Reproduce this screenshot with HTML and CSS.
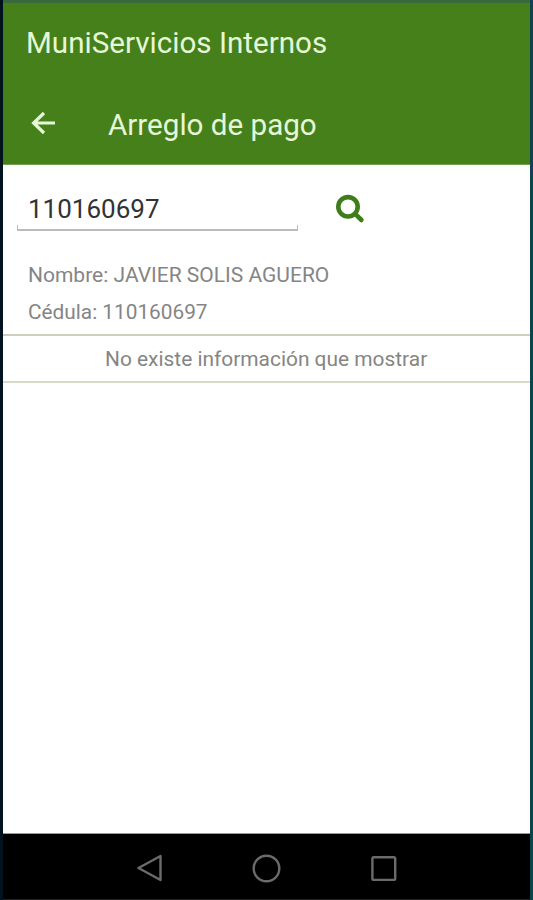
FILE: index.html
```html
<!DOCTYPE html>
<html lang="es">
<head>
    <meta charset="UTF-8">
    <meta name="viewport" content="width=device-width, initial-scale=1.0">
    <title>MuniServicios Internos</title>
    <link rel="stylesheet" href="styles.css">
</head>
<body>

    <div class="screen">
        <header class="header">
            <h1 class="app-title">MuniServicios Internos</h1>
            <div class="toolbar">
                <svg class="back" viewBox="0 0 26 24" width="26" height="24">
                    <path d="M14 2 L3.6 12 L14 22 M3.6 12 H25" />
                </svg>
                <h2 class="page-title">Arreglo de pago</h2>
            </div>
        </header>

        <main class="content">
            <div class="search">
                <div class="field">110160697</div>
                <svg class="search-icon" viewBox="0 0 30 30" width="30" height="30">
                    <circle cx="13" cy="12.8" r="9.7" />
                    <path d="M20.4 20.2 L26.4 26" />
                </svg>
            </div>
            <p class="detail">Nombre: JAVIER SOLIS AGUERO</p>
            <p class="detail cedula">Cédula: 110160697</p>
            <div class="empty">No existe información que mostrar</div>
        </main>

        <nav class="navbar">
            <svg viewBox="0 0 30 30" width="30" height="30">
                <path d="M25.5 3 V27 L3.5 15 Z" />
            </svg>
            <svg viewBox="0 0 30 30" width="30" height="30">
                <circle cx="14.5" cy="15.5" r="12.8" />
            </svg>
            <svg viewBox="0 0 30 30" width="30" height="30">
                <rect x="3.4" y="4.3" width="22.8" height="22.6" rx="1.5" />
            </svg>
        </nav>
    </div>

</body>
</html>
```

FILE: styles.css
```css
* {
    box-sizing: border-box;
}
body {
    margin: 0;
    font-family: Roboto, sans-serif;
    background: linear-gradient(90deg, #02131f 50%, #0f4350 50%);
}
h1, h2, p {
    margin: 0;
    font-weight: 400;
}
.screen {
    display: flex;
    flex-direction: column;
    width: 527px;
    height: 900px;
    margin-left: 3px;
    background: #fff;
}
.header {
    height: 165px;
    border-top: 3px solid #38683c;
    border-bottom: 1px solid #6fa04f;
    background: #45801b;
    color: #e6f7d8;
}
.app-title {
    height: 80px;
    padding-left: 23px;
    font-size: 29.6px;
    line-height: 81px;
}
.toolbar {
    display: flex;
    align-items: center;
    height: 80px;
    padding-left: 27px;
}
.back {
    fill: none;
    stroke: #e6f7d8;
    stroke-width: 3.2;
}
.page-title {
    margin-left: 52px;
    padding-top: 5px;
    font-size: 29.6px;
    line-height: 75px;
}
.content {
    flex: 1;
    color: #858585;
}
.search {
    display: flex;
    height: 91px;
    padding: 22px 0 0 14px;
}
.field {
    width: 281px;
    height: 44px;
    padding-left: 11px;
    color: #333;
    font-size: 26px;
    line-height: 44px;
    background:
        linear-gradient(#bbb, #bbb) 0 100% / 1px 6px no-repeat,
        linear-gradient(#bbb, #bbb) 100% 100% / 1px 6px no-repeat,
        linear-gradient(#bbb, #bbb) 0 100% / 100% 2px no-repeat;
}
.search-icon {
    margin: 7px 0 0 37px;
    fill: none;
    stroke: #3f7d1a;
    stroke-width: 4.6;
    stroke-linecap: round;
}
.detail {
    height: 38px;
    padding-left: 25px;
    font-size: 21px;
    line-height: 38px;
}
.cedula {
    font-size: 20.8px;
    line-height: 37px;
}
.empty {
    height: 49px;
    margin-top: 2px;
    padding-left: 102px;
    border-top: 2px solid #ced0bb;
    border-bottom: 2px solid #d8dac8;
    font-size: 20.9px;
    line-height: 47px;
}
.navbar {
    display: flex;
    justify-content: center;
    align-items: center;
    gap: 87px;
    height: 67px;
    padding-top: 3px;
    border-top: 1px solid #999;
    border-bottom: 1px solid #222;
    background: #000;
}
.navbar svg {
    fill: none;
    stroke: #6b6b6b;
    stroke-width: 2.4;
    stroke-linejoin: round;
}
```
